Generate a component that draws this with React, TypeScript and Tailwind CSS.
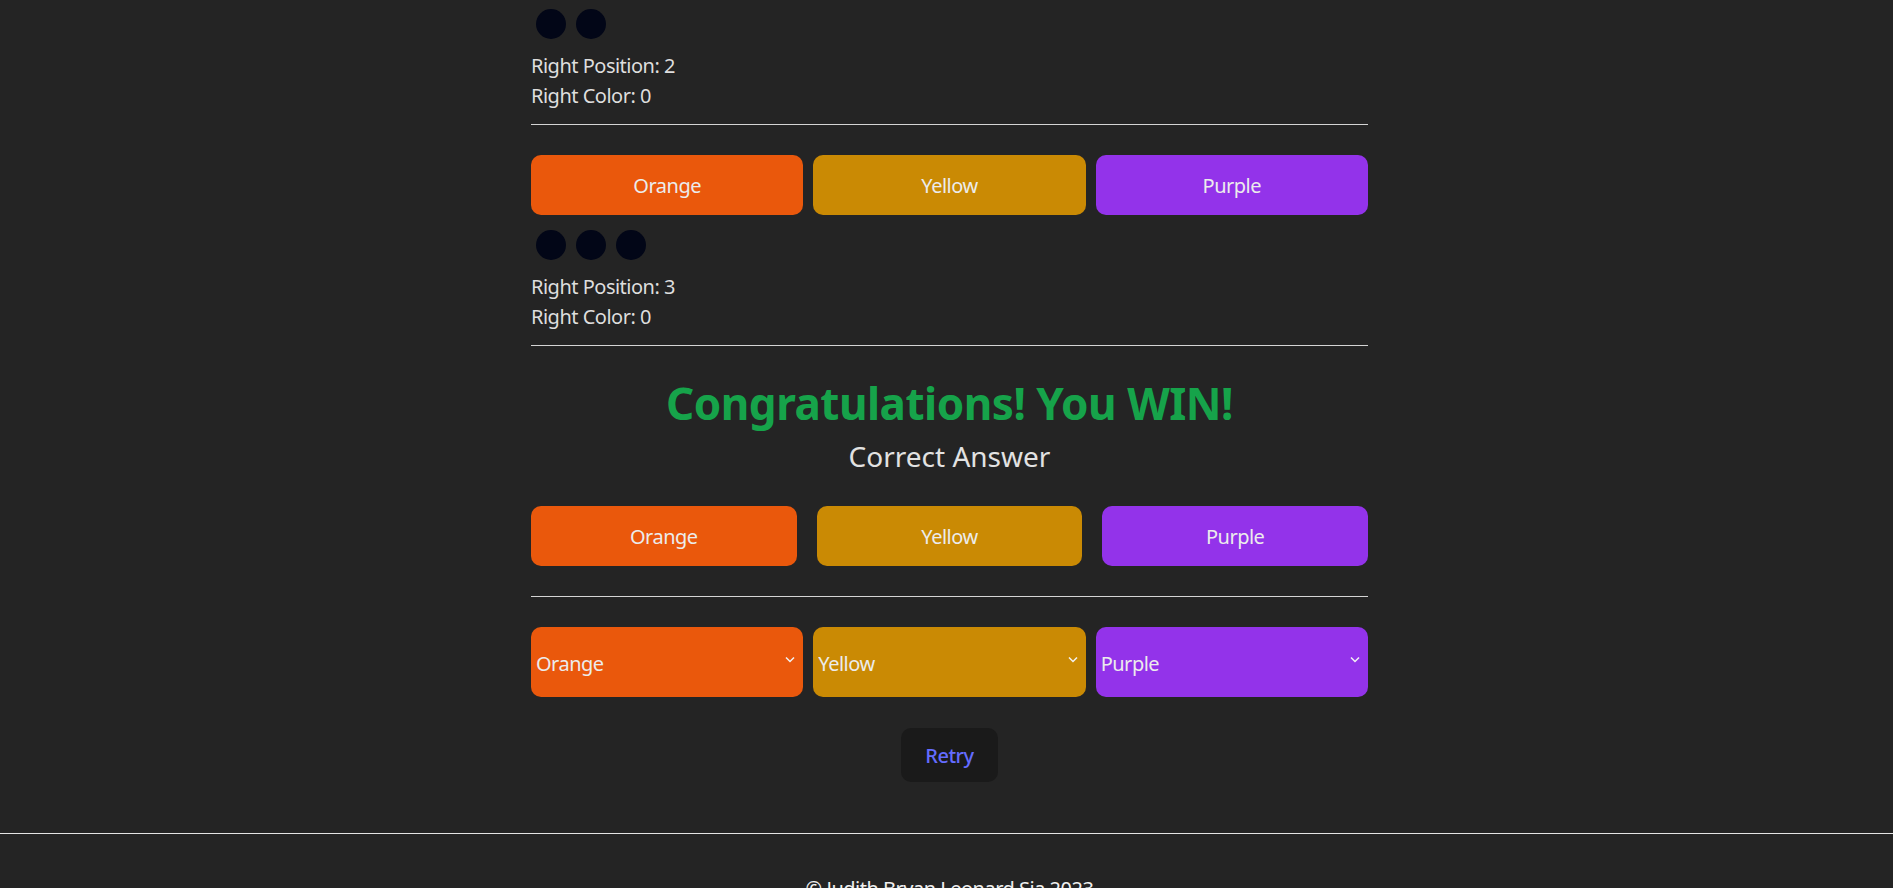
import { useState } from "react";

type Color = "Orange" | "Yellow" | "Purple";

const COLOR_CLASS: Record<Color, string> = {
  Orange: "bg-[#ea580c]",
  Yellow: "bg-[#ca8a04]",
  Purple: "bg-[#9333ea]",
};

const OPTIONS: Color[] = ["Orange", "Yellow", "Purple"];

function Dots({ count }: { count: number }) {
  return (
    <div className="flex">
      {Array.from({ length: count }).map((_, i) => (
        <div key={i} className="mx-[5px] h-[30px] w-[30px] rounded-full bg-[#020617]" />
      ))}
    </div>
  );
}

function Result({ position, color }: { position: number; color: number }) {
  return (
    <div className="mt-[12px] leading-[30px]">
      <div>Right Position: {position}</div>
      <div>Right Color: {color}</div>
    </div>
  );
}

function ColorButton({ color }: { color: Color }) {
  return (
    <button
      className={`h-[60px] rounded-[10px] pt-[2px] text-[20px] text-[#ececec] ${COLOR_CLASS[color]}`}
    >
      {color}
    </button>
  );
}

function ColorSelect({ value, onChange }: { value: Color; onChange: (c: Color) => void }) {
  return (
    <div className="relative">
      <select
        value={value}
        onChange={(e) => onChange(e.target.value as Color)}
        className={`h-[70px] w-full appearance-none rounded-[10px] pl-[5px] pt-[4px] text-[20px] tracking-[-0.025em] text-[#ececec] outline-none ${COLOR_CLASS[value]}`}
      >
        {OPTIONS.map((o) => (
          <option key={o} value={o} className="bg-[#242424]">
            {o}
          </option>
        ))}
      </select>
      <svg
        className="pointer-events-none absolute right-[8px] top-[29px]"
        width="10"
        height="7"
        viewBox="0 0 10 7"
        fill="none"
      >
        <path d="M1 1.5l4 4 4-4" stroke="#f2f2f2" strokeWidth="1.5" />
      </svg>
    </div>
  );
}

export default function App() {
  const [guess, setGuess] = useState<Color[]>(["Orange", "Yellow", "Purple"]);

  return (
    <div
      className="min-h-screen bg-[#242424] pl-[6px] text-[20px] tracking-[-0.025em] text-[#dedede]"
      style={{ fontFamily: '"Noto Sans", "Open Sans", sans-serif' }}
    >
      <div className="mx-auto w-[837px] pt-[9px]">
        {/* earlier guess, cut off at the top */}
        <Dots count={2} />
        <Result position={2} color={0} />
        <hr className="mt-[13px] border-t border-[#d4d4d4]" />

        {/* last guess */}
        <div className="mt-[30px] grid grid-cols-3 gap-[10px]">
          {OPTIONS.map((c) => (
            <ColorButton key={c} color={c} />
          ))}
        </div>
        <div className="mt-[15px]">
          <Dots count={3} />
        </div>
        <Result position={3} color={0} />
        <hr className="mt-[13px] border-t border-[#d4d4d4]" />

        <h2 className="mt-[30px] text-center text-[44px] font-bold leading-[54px] text-[#16a34a]">
          Congratulations! You WIN!
        </h2>
        <h3 className="mt-[5px] text-center text-[28px] leading-[42px] tracking-normal text-[#e2e2e2]">
          Correct Answer
        </h3>
        <div className="mt-[29px] grid grid-cols-3 gap-[20px]">
          {OPTIONS.map((c) => (
            <ColorButton key={c} color={c} />
          ))}
        </div>
        <hr className="mt-[30px] border-t border-[#d4d4d4]" />

        <div className="mt-[30px] grid grid-cols-3 gap-[10px]">
          {guess.map((g, i) => (
            <ColorSelect
              key={i}
              value={g}
              onChange={(c) => setGuess((prev) => prev.map((p, j) => (j === i ? c : p)))}
            />
          ))}
        </div>

        <div className="mt-[31px] flex justify-center">
          <button className="h-[54px] rounded-[10px] bg-[#1a1a1a] px-[24px] pt-[2px] text-[20px] font-medium text-[#646cff]">
            Retry
          </button>
        </div>
      </div>

      <footer className="mt-[51px]">
        <hr className="-ml-[6px] border-t border-[#e5e5e5]" />
        <p className="mt-[40px] pb-[30px] text-center leading-[30px] text-[#f0f0f0]">
          © Judith Bryan Leonard Sia 2023
        </p>
      </footer>
    </div>
  );
}
